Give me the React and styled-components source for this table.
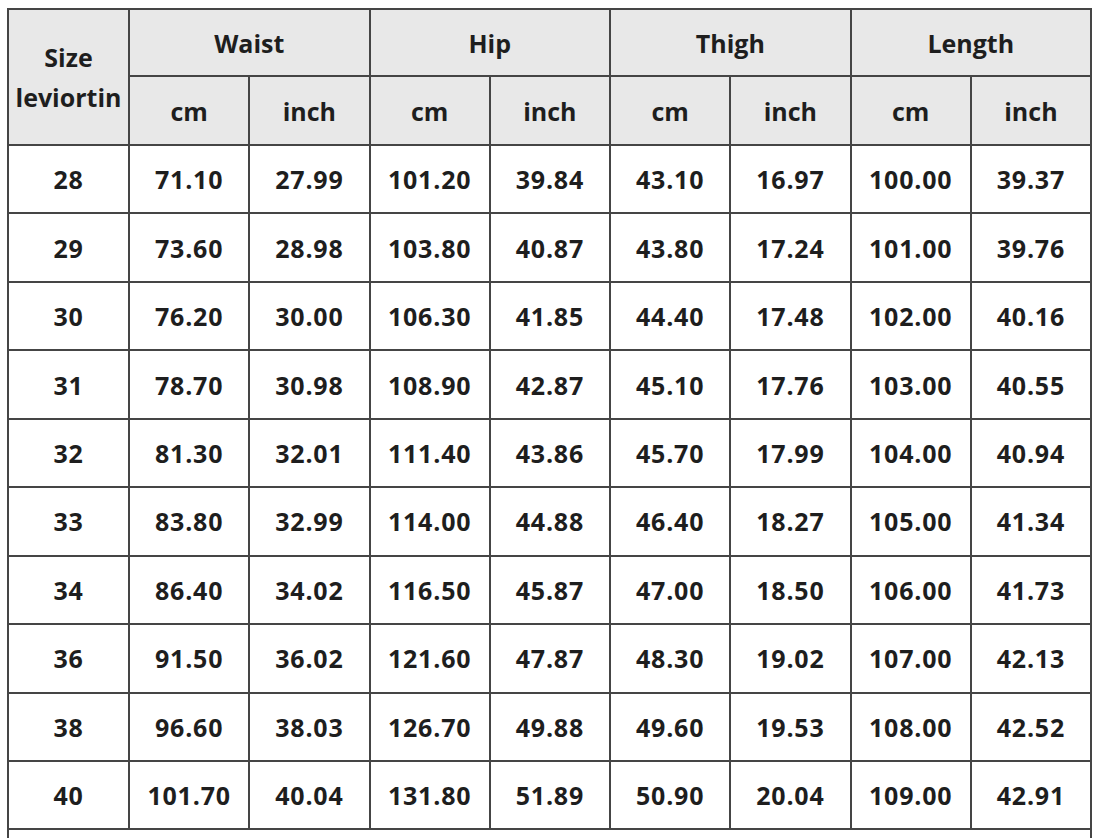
import React from "react";
import styled, { createGlobalStyle } from "styled-components";

const Global = createGlobalStyle`
  html, body {
    margin: 0;
    padding: 0;
    background: #fff;
    overflow: hidden;
  }
`;

const Page = styled.div`
  width: 1096px;
  height: 838px;
  overflow: hidden;
  padding: 8px 0 0 7px;
  box-sizing: border-box;
  font-family: "Open Sans", "Liberation Sans", sans-serif;
  color: #1e1e1e;
`;

const Table = styled.table`
  border-collapse: collapse;
  table-layout: fixed;
  width: 1083px;
`;

const Col = styled.col`
  width: ${(p) => p.w}px;
`;

const HeadCell = styled.th`
  background: #e8e8e8;
  border: 2px solid #454545;
  font-size: 25px;
  letter-spacing: 0;
  font-weight: 700;
  text-align: center;
  vertical-align: middle;
  padding: 0;
  height: ${(p) => p.h}px;
  line-height: ${(p) => (p.tall ? "40px" : "28px")};
`;

const Cell = styled.td`
  border: 2px solid #454545;
  font-size: 25px;
  letter-spacing: 0.8px;
  font-weight: 700;
  text-align: center;
  vertical-align: middle;
  padding: 0;
  height: 66.45px;
  line-height: 28px;
  background: #fff;
`;

const groups = ["Waist", "Hip", "Thigh", "Length"];

const rows = [
  ["28", "71.10", "27.99", "101.20", "39.84", "43.10", "16.97", "100.00", "39.37"],
  ["29", "73.60", "28.98", "103.80", "40.87", "43.80", "17.24", "101.00", "39.76"],
  ["30", "76.20", "30.00", "106.30", "41.85", "44.40", "17.48", "102.00", "40.16"],
  ["31", "78.70", "30.98", "108.90", "42.87", "45.10", "17.76", "103.00", "40.55"],
  ["32", "81.30", "32.01", "111.40", "43.86", "45.70", "17.99", "104.00", "40.94"],
  ["33", "83.80", "32.99", "114.00", "44.88", "46.40", "18.27", "105.00", "41.34"],
  ["34", "86.40", "34.02", "116.50", "45.87", "47.00", "18.50", "106.00", "41.73"],
  ["36", "91.50", "36.02", "121.60", "47.87", "48.30", "19.02", "107.00", "42.13"],
  ["38", "96.60", "38.03", "126.70", "49.88", "49.60", "19.53", "108.00", "42.52"],
  ["40", "101.70", "40.04", "131.80", "51.89", "50.90", "20.04", "109.00", "42.91"],
];

const App = () => {
  return (
    <Page>
      <Global />
      <Table>
        <colgroup>
          <Col w={121} />
          {Array.from({ length: 8 }).map((_, i) => (
            <Col key={i} w={120.25} />
          ))}
        </colgroup>
        <thead>
          <tr>
            <HeadCell rowSpan={2} tall h={65}>
              Size
              <br />
              leviortin
            </HeadCell>
            {groups.map((g) => (
              <HeadCell key={g} colSpan={2} h={65}>
                {g}
              </HeadCell>
            ))}
          </tr>
          <tr>
            {groups.map((g) => (
              <React.Fragment key={g}>
                <HeadCell h={67}>cm</HeadCell>
                <HeadCell h={67}>inch</HeadCell>
              </React.Fragment>
            ))}
          </tr>
        </thead>
        <tbody>
          {rows.map((r) => (
            <tr key={r[0]}>
              {r.map((v, i) => (
                <Cell key={i}>{v}</Cell>
              ))}
            </tr>
          ))}
          <tr>
            <Cell colSpan={9} />
          </tr>
        </tbody>
      </Table>
    </Page>
  );
};

export default App;
